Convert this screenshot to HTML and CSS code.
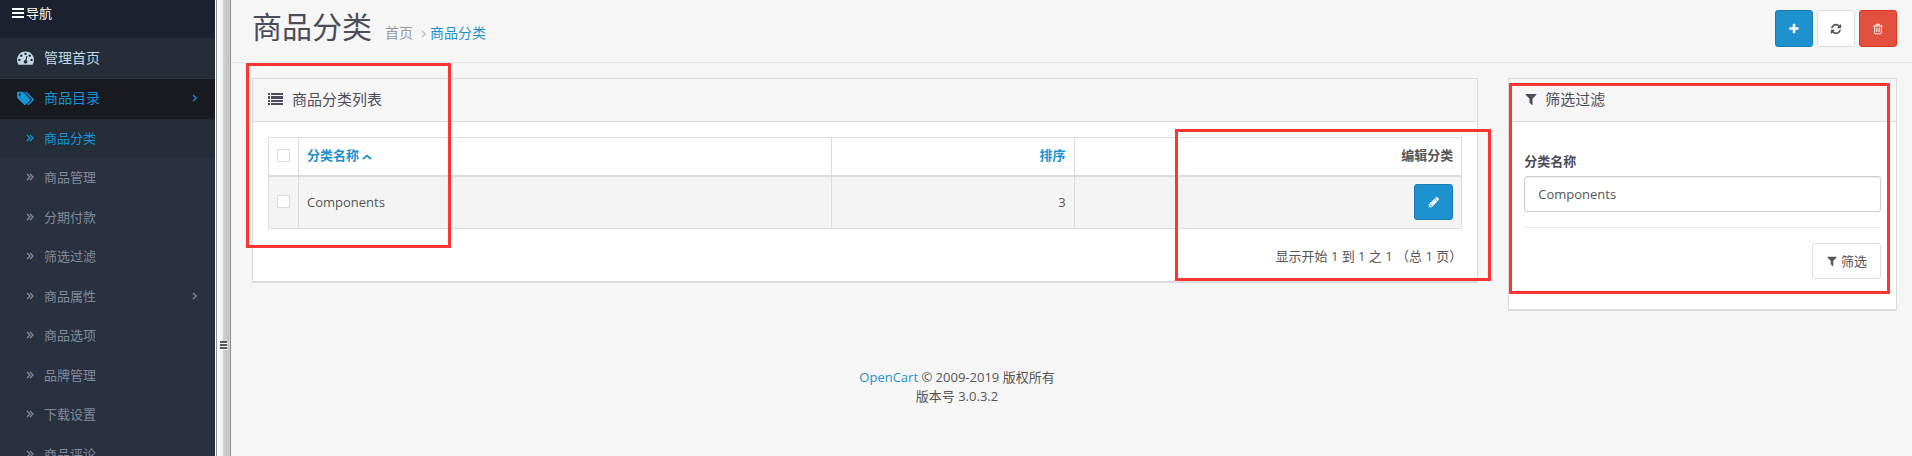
FILE: index.html
```html
<!DOCTYPE html>
<html lang="zh-CN">
<head>
  <meta charset="UTF-8">
  <meta name="viewport" content="width=device-width, initial-scale=1.0">
  <title>商品分类</title>
  <link rel="stylesheet" href="styles.css">
</head>
<body>
  <!-- shared icons -->
  <svg class="sprite" aria-hidden="true">
    <symbol id="i-filter" viewBox="0 0 1792 1792"><path d="M1595 295q17 41-14 70l-493 493v742q0 42-39 59-13 5-25 5-27 0-45-19l-256-256q-19-19-19-45v-486l-493-493q-31-29-14-70 17-39 59-39h1280q42 0 59 39z"/></symbol>
    <symbol id="i-double" viewBox="0 0 8 8"><path d="M1 1l3 3-3 3M4 1l3 3-3 3" fill="none" stroke="currentColor" stroke-width="1.3"/></symbol>
    <symbol id="i-angle" viewBox="0 0 6 8"><path d="M1 1l3.2 3L1 7" fill="none" stroke="currentColor" stroke-width="1.3"/></symbol>
  </svg>

  <div class="layout">
    <nav class="sidebar">
      <div class="nav-title">
        <svg class="bars" viewBox="0 0 12 10"><path d="M0 0h12v2H0zM0 4h12v2H0zM0 8h12v2H0z"/></svg>
        导航
      </div>
      <a href="#" class="menu-item">
        <svg class="menu-icon" viewBox="0 0 1792 1792"><path d="M384 1152q0-53-37.5-90.5t-90.5-37.5-90.5 37.5-37.5 90.5 37.5 90.5 90.5 37.5 90.5-37.5 37.5-90.5zm192-448q0-53-37.5-90.5t-90.5-37.5-90.5 37.5-37.5 90.5 37.5 90.5 90.5 37.5 90.5-37.5 37.5-90.5zm428 481l101-382q6-26-7.5-48.5t-38.5-29.5-48 6.5-30 39.5l-101 382q-60 5-107 43.5t-63 98.5q-20 77 20 146t117 89 146-20 89-117q16-60-6-117t-72-91zm660-33q0-53-37.5-90.5t-90.5-37.5-90.5 37.5-37.5 90.5 37.5 90.5 90.5 37.5 90.5-37.5 37.5-90.5zm-640-640q0-53-37.5-90.5t-90.5-37.5-90.5 37.5-37.5 90.5 37.5 90.5 90.5 37.5 90.5-37.5 37.5-90.5zm448 192q0-53-37.5-90.5t-90.5-37.5-90.5 37.5-37.5 90.5 37.5 90.5 90.5 37.5 90.5-37.5 37.5-90.5zm320 448q0 261-141 483-19 29-54 29h-1402q-35 0-54-29-141-221-141-483 0-182 71-348t191-286 286-191 348-71 348 71 286 191 191 286 71 348z"/></svg>
        管理首页
      </a>
      <a href="#" class="menu-item active">
        <svg class="menu-icon" viewBox="0 0 1920 1792"><path d="M448 448q0-53-37.5-90.5t-90.5-37.5-90.5 37.5-37.5 90.5 37.5 90.5 90.5 37.5 90.5-37.5 37.5-90.5zm1067 576q0 53-37 90l-491 492q-39 37-91 37-53 0-90-37l-715-716q-38-37-64.5-101t-26.5-117v-416q0-52 38-90t90-38h416q53 0 117 26.5t102 64.5l715 714q37 39 37 91zm384 0q0 53-37 90l-491 492q-39 37-91 37-36 0-59-14t-53-45l470-470q37-37 37-90 0-52-37-91l-715-714q-38-38-102-64.5t-117-26.5h224q53 0 117 26.5t102 64.5l715 714q37 39 37 91z"/></svg>
        商品目录
        <svg class="angle"><use href="#i-angle"/></svg>
      </a>
      <ul class="submenu">
        <li><a href="#" class="active"><svg class="double"><use href="#i-double"/></svg>商品分类</a></li>
        <li><a href="#"><svg class="double"><use href="#i-double"/></svg>商品管理</a></li>
        <li><a href="#"><svg class="double"><use href="#i-double"/></svg>分期付款</a></li>
        <li><a href="#"><svg class="double"><use href="#i-double"/></svg>筛选过滤</a></li>
        <li><a href="#"><svg class="double"><use href="#i-double"/></svg>商品属性<svg class="angle"><use href="#i-angle"/></svg></a></li>
        <li><a href="#"><svg class="double"><use href="#i-double"/></svg>商品选项</a></li>
        <li><a href="#"><svg class="double"><use href="#i-double"/></svg>品牌管理</a></li>
        <li><a href="#"><svg class="double"><use href="#i-double"/></svg>下载设置</a></li>
        <li><a href="#"><svg class="double"><use href="#i-double"/></svg>商品评论</a></li>
      </ul>
    </nav>

    <div class="splitter">
      <svg class="grip" viewBox="0 0 8 9"><path d="M0 0h7v2H0zM0 3h7v2H0zM0 6h7v2H0z" fill="#555"/><path d="M1 2h7v1H1zM1 5h7v1H1zM1 8h7v1H1z" fill="#fff"/></svg>
    </div>

    <main class="content">
      <header class="page-header">
        <h1>商品分类</h1>
        <div class="breadcrumb">
          <a href="#">首页</a>
          <svg class="sep"><use href="#i-angle"/></svg>
          <a href="#" class="current">商品分类</a>
        </div>
        <div class="actions">
          <button type="button" class="btn btn-primary" aria-label="新增">
            <svg class="icon" viewBox="0 0 1792 1792"><path d="M1600 736v192q0 40-28 68t-68 28h-416v416q0 40-28 68t-68 28h-192q-40 0-68-28t-28-68v-416h-416q-40 0-68-28t-28-68v-192q0-40 28-68t68-28h416v-416q0-40 28-68t68-28h192q40 0 68 28t28 68v416h416q40 0 68 28t28 68z"/></svg>
          </button>
          <button type="button" class="btn btn-default" aria-label="刷新">
            <svg class="icon" viewBox="0 0 1792 1792"><path d="M1639 1056q0 5-1 7-64 268-268 434.5t-478 166.5q-146 0-282.5-55t-243.5-157l-129 129q-19 19-45 19t-45-19-19-45v-448q0-26 19-45t45-19h448q26 0 45 19t19 45-19 45l-137 137q71 66 161 102t187 36q134 0 250-65t186-179q11-17 53-117 8-23 30-23h192q13 0 22.5 9.5t9.5 22.5zm25-800v448q0 26-19 45t-45 19h-448q-26 0-45-19t-19-45 19-45l138-138q-148-137-349-137-134 0-250 65t-186 179q-11 17-53 117-8 23-30 23h-199q-13 0-22.5-9.5t-9.5-22.5v-7q65-268 270-434.5t480-166.5q146 0 284 55.5t245 156.5l130-129q19-19 45-19t45 19 19 45z"/></svg>
          </button>
          <button type="button" class="btn btn-danger" aria-label="删除">
            <svg class="icon" viewBox="0 0 1792 1792"><path d="M704 736v576q0 14-9 23t-23 9h-64q-14 0-23-9t-9-23v-576q0-14 9-23t23-9h64q14 0 23 9t9 23zm256 0v576q0 14-9 23t-23 9h-64q-14 0-23-9t-9-23v-576q0-14 9-23t23-9h64q14 0 23 9t9 23zm256 0v576q0 14-9 23t-23 9h-64q-14 0-23-9t-9-23v-576q0-14 9-23t23-9h64q14 0 23 9t9 23zm128 724v-948h-896v948q0 22 7 40.5t14.5 27 10.5 8.5h832q3 0 10.5-8.5t14.5-27 7-40.5zm-672-1076h448l-48-117q-7-9-17-11h-317q-10 2-17 11zm928 32v64q0 14-9 23t-23 9h-96v948q0 83-47 143.5t-113 60.5h-832q-66 0-113-58.5t-47-141.5v-952h-96q-14 0-23-9t-9-23v-64q0-14 9-23t23-9h309l70-167q15-37 54-63t79-26h320q40 0 79 26t54 63l70 167h309q14 0 23 9t9 23z"/></svg>
          </button>
        </div>
      </header>

      <div class="row">
        <section class="panel list-panel">
          <h3 class="panel-heading">
            <svg class="heading-icon" viewBox="0 0 15 12"><path d="M0 0h2v2H0zM3 0h12v2H3zM0 3h2v3H0zM3 3h12v3H3zM0 7h2v2H0zM3 7h12v2H3zM0 10h2v2H0zM3 10h12v2H3z"/></svg>
            商品分类列表
          </h3>
          <div class="panel-body">
            <table>
              <thead>
                <tr>
                  <th class="col-check"><input type="checkbox" aria-label="全选"></th>
                  <th class="col-name"><a href="#">分类名称 <svg class="sort" viewBox="0 0 10 6"><path d="M1 5l4-3.4L9 5" fill="none" stroke="currentColor" stroke-width="1.8"/></svg></a></th>
                  <th class="col-sort"><a href="#">排序</a></th>
                  <th class="col-edit">编辑分类</th>
                </tr>
              </thead>
              <tbody>
                <tr>
                  <td class="col-check"><input type="checkbox" aria-label="Components"></td>
                  <td class="col-name">Components</td>
                  <td class="col-sort">3</td>
                  <td class="col-edit">
                    <a href="#" class="btn btn-primary" aria-label="编辑"><svg class="icon" viewBox="0 0 1792 1792"><path d="M491 1536l91-91-235-235-91 91v107h128v128h107zm523-928q0-22-22-22-10 0-17 7l-542 542q-7 7-7 17 0 22 22 22 10 0 17-7l542-542q7-7 7-17zm-54-192l416 416-832 832h-416v-416zm683 96q0 53-37 90l-166 166-416-416 166-165q36-38 90-38 53 0 91 38l235 234q37 39 37 91z"/></svg></a>
                  </td>
                </tr>
              </tbody>
            </table>
            <div class="results">显示开始 1 到 1 之 1 （总 1 页）</div>
          </div>
          <div class="mark mark-name"></div>
          <div class="mark mark-edit"></div>
        </section>

        <section class="panel filter-panel">
          <h3 class="panel-heading">
            <svg class="heading-icon filter"><use href="#i-filter"/></svg>
            筛选过滤
          </h3>
          <form class="panel-body">
            <label for="input-name">分类名称</label>
            <input type="text" id="input-name" value="Components">
            <div class="form-footer">
              <button type="button" class="btn btn-default"><svg class="icon"><use href="#i-filter"/></svg>筛选</button>
            </div>
          </form>
          <div class="mark mark-filter"></div>
        </section>
      </div>

      <footer>
        <a href="#">OpenCart</a> © 2009-2019 版权所有<br>版本号 3.0.3.2
      </footer>
    </main>
  </div>
</body>
</html>
```
FILE: styles.css
```css
* {
  box-sizing: border-box;
}
body {
  margin: 0;
  background: #f6f6f6;
  color: #4c4d5a;
  font-family: "Open Sans", "Noto Sans CJK SC", sans-serif;
  font-size: 13px;
  line-height: 20px;
}
a {
  color: #1e91cf;
  text-decoration: none;
}
svg {
  fill: currentColor;
  flex: none;
}
.sprite {
  display: none;
}
.layout {
  display: flex;
  height: 100vh;
  overflow: hidden;
}

/* Sidebar */
.sidebar {
  flex: none;
  width: 216px;
  background: #293040;
  border-right: 1px solid #fff;
}
.nav-title {
  display: flex;
  align-items: center;
  gap: 2px;
  height: 38px;
  padding: 0 12px 12px;
  background: #1b212e;
  color: #fff;
}
.bars {
  width: 12px;
  height: 10px;
}
.menu-item {
  display: flex;
  align-items: center;
  height: 41px;
  padding: 0 17px 1px;
  background: #252d38;
  border-bottom: 1px solid #2f3744;
  color: #c4d9e8;
  font-size: 14px;
}
.menu-item.active {
  height: 40px;
  padding-bottom: 2px;
  background: #181a20;
  border-bottom: 0;
  color: #1495d8;
}
.menu-icon {
  width: 17px;
  height: 17px;
  margin-right: 10px;
}
.angle {
  width: 6px;
  height: 8px;
  margin-left: auto;
}
.submenu {
  list-style: none;
  margin: 0;
  padding: 0;
}
.submenu a {
  display: flex;
  align-items: center;
  height: 39px;
  padding: 0 17px 2px 26px;
  color: #808b9c;
}
.submenu li:nth-child(even) a {
  height: 40px;
}
.submenu a.active {
  background: #252d38;
  color: #1495d8;
}
.double {
  width: 8px;
  height: 8px;
  margin-right: 10px;
}

/* Frame splitter */
.splitter {
  flex: none;
  width: 15px;
  padding: 341px 0 0 3px;
  border: solid #909090;
  border-width: 0 1px;
  background: linear-gradient(to right, #fff 0, #eee 6px, #d2d2d2 6px, #c2c2c4 12px, #ddd 13px);
}
.grip {
  display: block;
  width: 8px;
  height: 9px;
}

/* Page header */
.content {
  flex: 1;
  min-width: 0;
}
.page-header {
  display: flex;
  align-items: center;
  height: 63px;
  padding: 0 15px 5px 21px;
  border-bottom: 1px solid #e7e7e7;
}
h1 {
  margin: 0 13px 0 0;
  padding-bottom: 4px;
  font-size: 30px;
  font-weight: 400;
  line-height: 40px;
}
.breadcrumb {
  display: flex;
  align-items: center;
  padding-top: 8px;
  font-size: 14px;
}
.breadcrumb a {
  color: #999;
}
.breadcrumb a.current {
  color: #1e91cf;
}
.sep {
  width: 6px;
  height: 8px;
  margin: 2px 3px 0 8px;
  color: #bbb;
}
.actions {
  display: flex;
  gap: 4px;
  margin-left: auto;
}
.btn {
  display: inline-flex;
  align-items: center;
  justify-content: center;
  gap: 3px;
  height: 37px;
  padding: 0 12px;
  border: 1px solid;
  border-radius: 3px;
  font: inherit;
  cursor: pointer;
}
.icon {
  width: 12px;
  height: 12px;
}
.btn-primary {
  background: #1e91cf;
  border-color: #197bb0;
  color: #fff;
}
.btn-default {
  background: #fff;
  border-color: #ddd;
  color: #555;
}
.btn-danger {
  background: #e3503e;
  border-color: #dd3520;
  color: #fff;
}

/* Panels */
.row {
  display: grid;
  grid-template-columns: repeat(12, 1fr);
  column-gap: 30px;
  align-items: start;
  padding: 15px 15px 0 21px;
}
.panel {
  position: relative;
  background: #fff;
  border: 1px solid #dcdcdc;
  border-bottom-width: 2px;
}
.list-panel {
  grid-column: span 9;
}
.filter-panel {
  grid-column: span 3;
}
.panel-heading {
  display: flex;
  align-items: center;
  gap: 9px;
  height: 43px;
  margin: 0;
  padding: 0 15px 2px;
  background: #f6f6f6;
  border-bottom: 1px solid #dcdcdc;
  font-size: 15px;
  font-weight: 400;
}
.heading-icon {
  width: 15px;
  height: 12px;
}
.heading-icon.filter {
  width: 14px;
  height: 14px;
  margin-right: -2px;
}
.panel-body {
  padding: 15px;
}

/* Category table */
table {
  width: 100%;
  border-collapse: collapse;
  table-layout: fixed;
  color: #555;
}
th,
td {
  border: 1px solid #dcdcdc;
  padding: 0 8px;
  text-align: right;
}
th {
  height: 38px;
  padding-bottom: 3px;
}
thead th {
  border-bottom: 2px solid #dcdcdc;
}
td {
  height: 53px;
  background: #f4f4f4;
}
.col-check {
  width: 30px;
  padding: 0 0 4px;
  text-align: center;
}
.col-name {
  width: 44.7%;
  text-align: left;
}
.col-sort {
  width: 20.3%;
}
.col-edit .btn {
  width: 39px;
  height: 36px;
  vertical-align: middle;
}
.sort {
  width: 10px;
  height: 6px;
}
input[type="checkbox"] {
  appearance: none;
  width: 13px;
  height: 13px;
  margin: 0;
  border: 1px solid #dcdcdc;
  border-radius: 1px;
  background: #fff;
  vertical-align: middle;
}
input[type="checkbox"]:checked {
  background: #1e91cf;
}
.results {
  padding: 17px 0 0;
  color: #555;
  text-align: right;
}

/* Filter form */
.filter-panel .panel-body {
  padding: 29px 15px 30px;
}
label {
  display: block;
  margin-bottom: 5px;
  font-weight: 700;
}
input[type="text"] {
  display: block;
  width: 100%;
  height: 36px;
  padding: 0 13px;
  border: 1px solid #ccc;
  border-radius: 3px;
  box-shadow: inset 0 1px 1px #eee;
  color: #555;
  font: inherit;
}
.form-footer {
  margin-top: 15px;
  padding-top: 15px;
  border-top: 1px solid #ededed;
  text-align: right;
}
.form-footer .btn {
  height: 36px;
  padding: 0 13px;
  vertical-align: top;
}

/* Red highlight frames */
.mark {
  position: absolute;
  border: 3px solid #ff3535;
  pointer-events: none;
}
.mark-name {
  top: -16px;
  left: -7px;
  width: 205px;
  height: 185px;
}
.mark-edit {
  top: 50px;
  right: -14px;
  width: 316px;
  height: 152px;
}
.mark-filter {
  top: 4px;
  left: 0;
  right: 6px;
  height: 211px;
}

footer {
  padding: 57px 229px 0 0;
  color: #555;
  line-height: 19px;
  text-align: center;
}
```
